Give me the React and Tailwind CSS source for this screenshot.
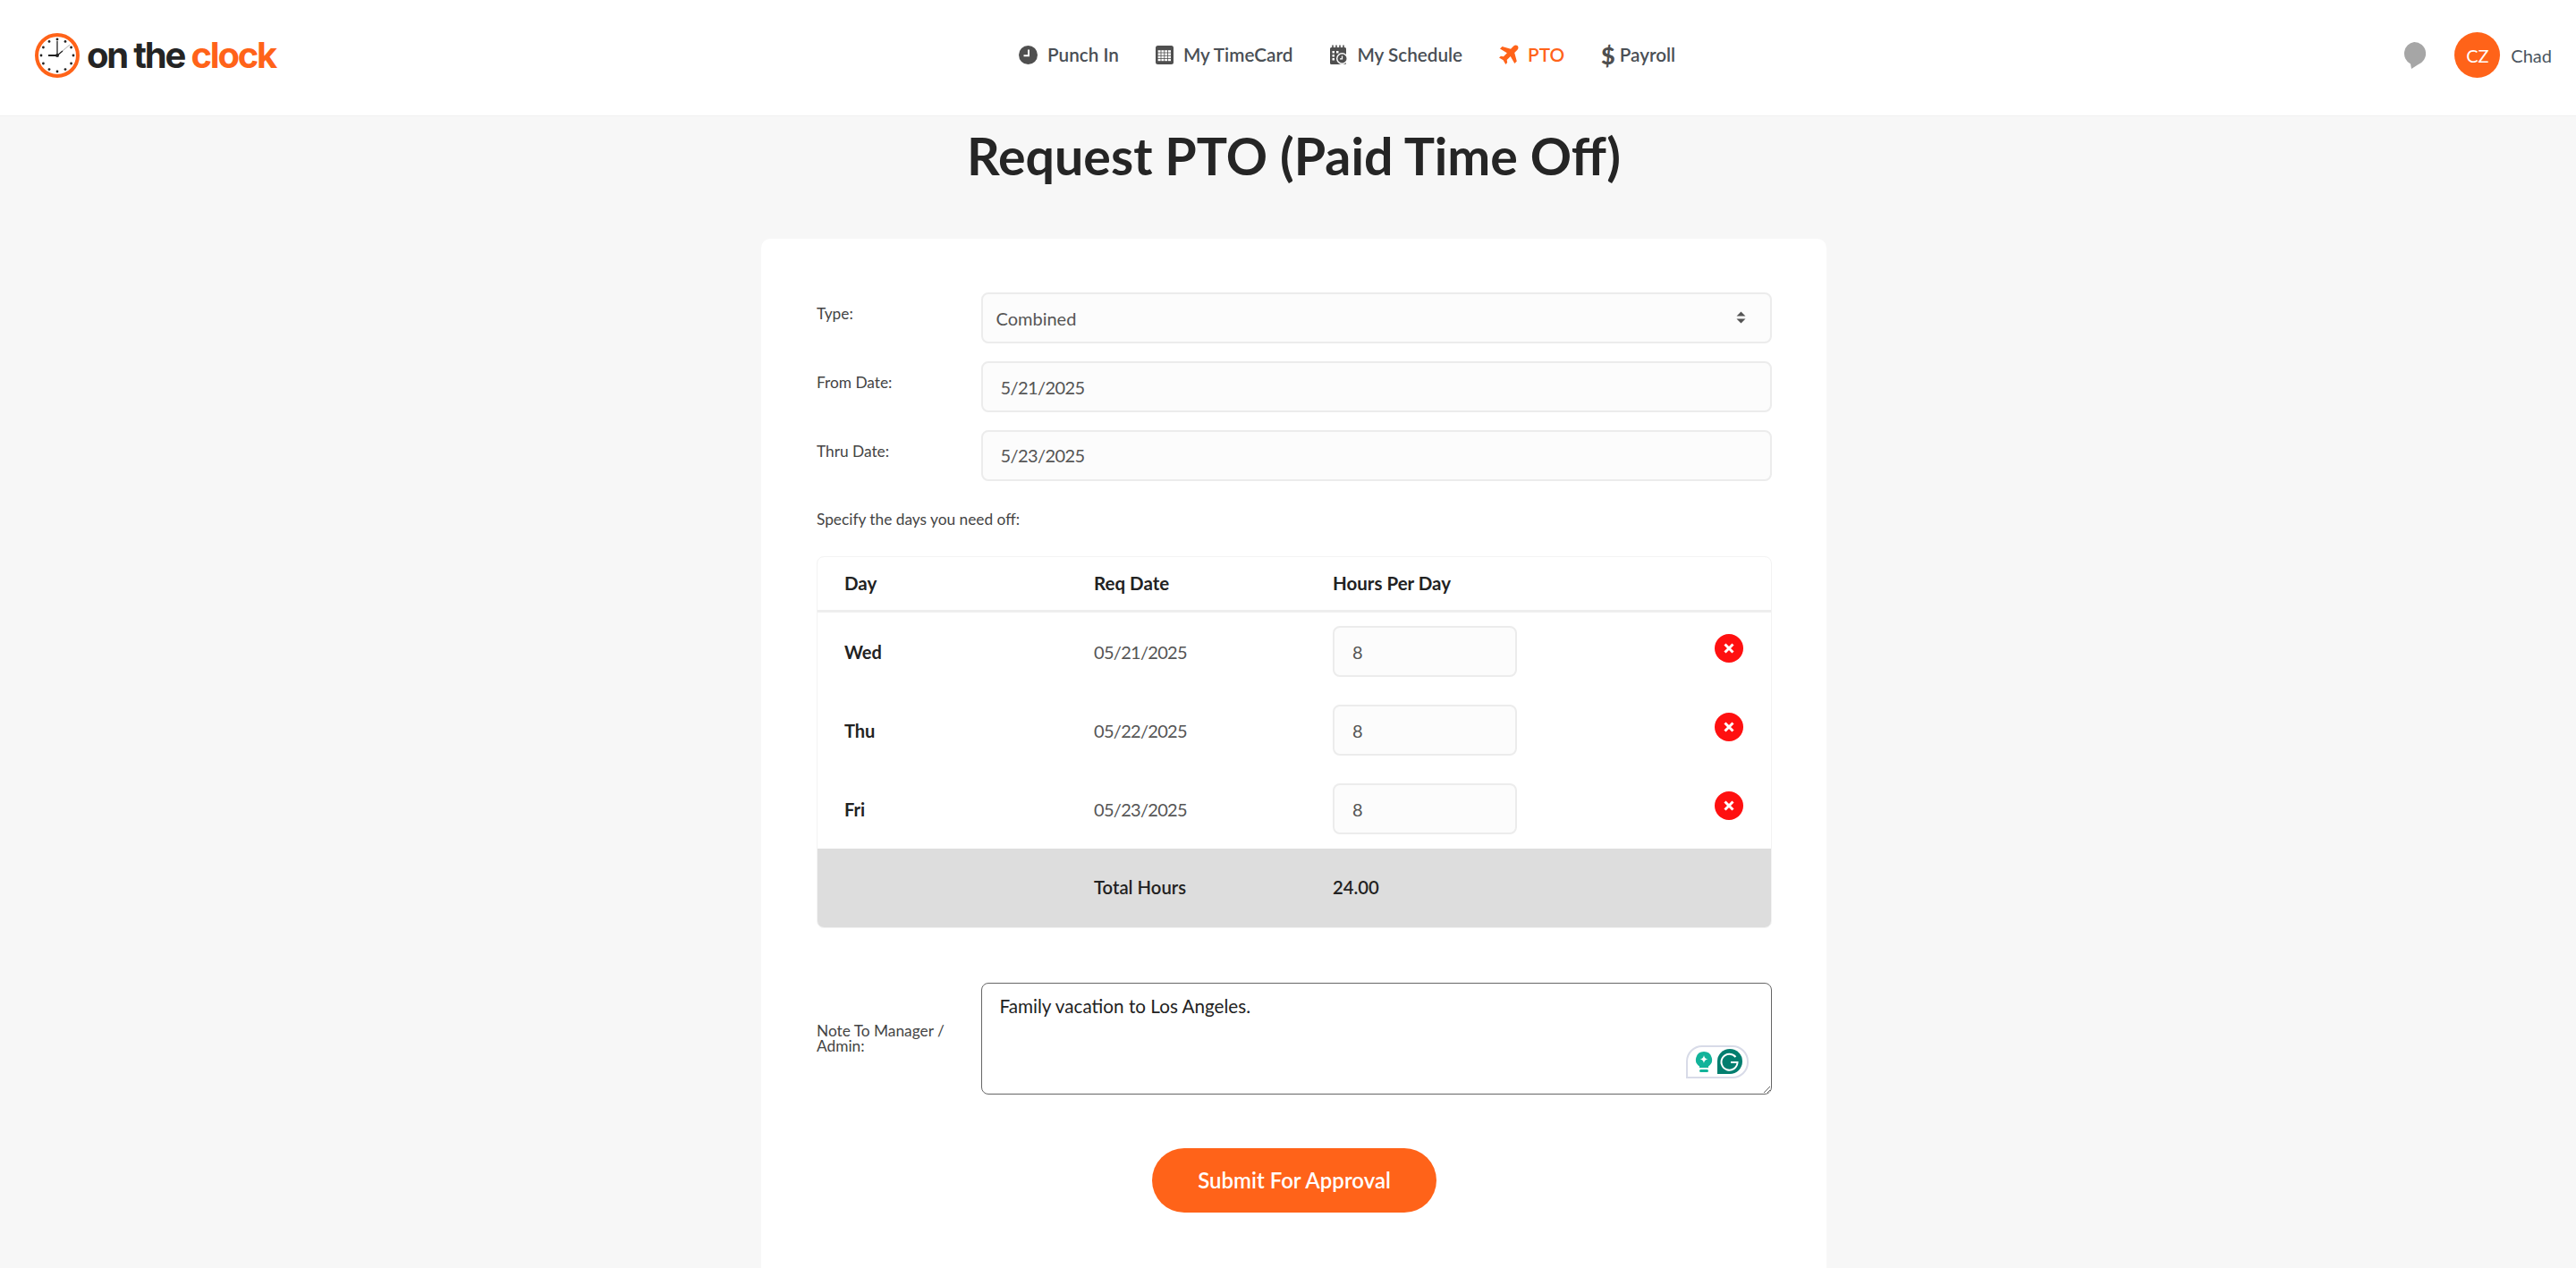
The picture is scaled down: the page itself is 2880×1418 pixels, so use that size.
const FONT = "font-['Lato','Open_Sans',sans-serif]";

function ClockLogo() {
  const dots = [];
  for (let i = 0; i < 12; i++) {
    const a = (i * Math.PI) / 6;
    dots.push(<circle key={i} cx={25 + 18 * Math.sin(a)} cy={25 - 18 * Math.cos(a)} r="1.4" fill="#222" />);
  }
  return (
    <svg width="50" height="50" viewBox="0 0 50 50">
      <circle cx="25" cy="25" r="23" fill="#fff" stroke="#ff6319" strokeWidth="4" />
      {dots}
      <path d="M25 25V9" stroke="#222" strokeWidth="1.3" />
      <path d="M25 25H15" stroke="#222" strokeWidth="2" />
      <path d="M25 25L39 13" stroke="#999" strokeWidth="0.8" />
      <path d="M25 25L31 20" stroke="#222" strokeWidth="1.2" />
      <circle cx="25" cy="25" r="2" fill="#222" />
    </svg>
  );
}

function PunchIcon() {
  return (
    <svg width="21" height="21" viewBox="0 0 21 21">
      <circle cx="10.5" cy="10.5" r="10.500" fill="#4f4f4f" />
      <path d="M11 4.500v6.700H5.500" fill="none" stroke="#fff" strokeWidth="2" />
    </svg>
  );
}

function GridIcon() {
  const cells = [];
  for (let r = 0; r < 4; r++) {
    for (let c = 0; c < 4; c++) {
      cells.push(<rect key={`${r}-${c}`} x={2.6 + c * 3.8} y={5.2 + r * 3.2} width="3" height="2.4" fill="#fff" />);
    }
  }
  return (
    <svg width="20" height="21" viewBox="0 0 20 21">
      <rect x="0" y="0" width="20" height="21" rx="2.5" fill="#4f4f4f" />
      {cells}
    </svg>
  );
}

function ScheduleIcon() {
  return (
    <svg width="22" height="22" viewBox="0 0 22 22">
      <path d="M1 4.5A1.5 1.5 0 0 1 2.500 3H17.500A1.500 1.500 0 0 1 19 4.500V20.500A1.500 1.500 0 0 1 17.500 22H2.500A1.500 1.500 0 0 1 1 20.500Z" fill="#4f4f4f" />
      <path d="M4 0.500V4M8 0.500V4M12 0.500V4M16 0.500V4" stroke="#4f4f4f" strokeWidth="1.600" />
      <rect x="3.500" y="7" width="2.500" height="2.500" fill="#fff" />
      <rect x="3.500" y="11" width="2.500" height="2.500" fill="#fff" />
      <rect x="3.500" y="15" width="2.500" height="2.500" fill="#fff" />
      <rect x="8" y="7" width="2.500" height="2.500" fill="#fff" />
      <circle cx="14.500" cy="15.500" r="6.500" fill="#fff" />
      <circle cx="14.500" cy="15.500" r="5" fill="#4f4f4f" />
      <path d="M14.500 12.500V15.800H12" stroke="#fff" strokeWidth="1.300" fill="none" />
    </svg>
  );
}

function PlaneIcon() {
  return (
    <svg width="22" height="22" viewBox="0 0 24 24">
      <path
        fill="#ff6319"
        d="M22.600 1.400c-1.300-1.300-3.500-1.200-4.900.2L14.200 5.100 3.800 2.300 1.100 5l8.600 5-4.300 4.400-3.300-.5L0 15.900l5 3 3 5 2-2-.5-3.300 4.400-4.300 5 8.600 2.700-2.700-2.800-10.400 3.500-3.500c1.400-1.400 1.500-3.600.3-4.900z"
      />
    </svg>
  );
}

function NavItem({ icon, label, active, gap }) {
  return (
    <a className={`flex items-center ${gap} text-[20.700px] font-semibold ${active ? "text-[#ff6319]" : "text-[#4a4f55]"}`}>
      {icon}
      <span>{label}</span>
    </a>
  );
}

function Header() {
  return (
    <header className="flex h-[130px] items-center border-b border-[#f1f1f1] bg-white pb-[6px]">
      <div className="flex w-[1139px] items-center pl-[39px]">
        <ClockLogo />
        <span className="ml-[8px] font-['Inter',sans-serif] text-[40px] font-bold leading-none tracking-[-2.200px] text-[#242424]">
          on the <span className="text-[#ff6319]">clock</span>
        </span>
      </div>
      <nav className="flex items-center gap-[41px]">
        <NavItem icon={<PunchIcon />} label="Punch In" gap="gap-[11px]" />
        <NavItem icon={<GridIcon />} label="My TimeCard" gap="gap-[11px]" />
        <NavItem icon={<ScheduleIcon />} label="My Schedule" gap="gap-[9px]" />
        <NavItem icon={<PlaneIcon />} label="PTO" active gap="gap-[10px]" />
        <NavItem
          icon={<span className="text-[27px] font-black leading-none text-[#4f4f4f]">$</span>}
          label="Payroll"
          gap="gap-[5px]"
        />
      </nav>
      <div className="ml-auto flex items-center pr-[27px]">
        <svg width="26" height="30" viewBox="0 0 26 30">
          <path d="M13 0a13 13 0 0 1 4 25.400L10 30l-1-5.600A13 13 0 0 1 13 0z" fill="#a6a6a6" />
        </svg>
        <div className="ml-[32px] flex h-[51px] w-[51px] items-center justify-center rounded-full bg-[#ff6319] text-[20px] text-white">
          CZ
        </div>
        <span className="ml-[12px] text-[20px] text-[#4a5560]">Chad</span>
      </div>
    </header>
  );
}

function FieldRow({ label, children, className = "" }) {
  return (
    <div className={`flex ${className}`}>
      <label className="w-[183.500px] shrink-0 pt-[12px] text-[17.300px] leading-[24px] text-[#444]">{label}</label>
      <div className="relative flex-1">{children}</div>
    </div>
  );
}

const inputCls =
  "block h-[57px] w-full rounded-[8px] border-2 border-[#ececec] bg-[#fcfcfc] px-[20px] text-[20px] text-[#555] outline-none";

function RemoveBtn() {
  return (
    <span className="flex h-[32px] w-[32px] items-center justify-center rounded-full bg-[#ff1010]">
      <svg width="14" height="14" viewBox="0 0 14 14">
        <path d="M2.500 2.500L11.500 11.500M11.500 2.500L2.500 11.500" stroke="#fff" strokeWidth="3" />
      </svg>
    </span>
  );
}

function DayRow({ day, date }) {
  return (
    <div className="flex h-[88px] items-center pl-[30px] text-[20px]">
      <span className="w-[279px] font-bold text-[#222]">{day}</span>
      <span className="w-[267px] tracking-[-0.700px] text-[#555]">{date}</span>
      <input
        defaultValue="8"
        readOnly
        className="h-[57px] w-[206px] rounded-[8px] border-2 border-[#ececec] bg-[#fcfcfc] px-[20px] text-[20px] text-[#555] outline-none"
      />
      <span className="ml-auto mr-[31px] -translate-y-[4px]">
        <RemoveBtn />
      </span>
    </div>
  );
}

function Grammarly() {
  return (
    <div className="absolute bottom-[18px] right-[26px] flex h-[37px] w-[70px] items-center rounded-t-[18px] rounded-br-[18px] border-2 border-[#d8dbe8] bg-white pl-[8px]">
      <svg width="20" height="25" viewBox="0 0 20 25">
        <path d="M10 1a9 9 0 0 1 5 16.500V19H5v-1.500A9 9 0 0 1 10 1z" fill="#12b39a" />
        <rect x="5" y="21" width="10" height="3" rx="1.500" fill="#12b39a" />
        <path d="M10 5c.6 3 1.400 3.800 4.500 4.500-3.100.7-3.900 1.500-4.500 4.500-.6-3-1.400-3.800-4.500-4.500C8.600 8.800 9.400 8 10 5z" fill="#fff" />
      </svg>
      <svg className="ml-[5px]" width="28" height="28" viewBox="0 0 28 28">
        <path d="M14 0a14 14 0 0 1 0 28H0V14A14 14 0 0 1 14 0z" fill="#027e6f" />
        <path d="M20.500 9A9 9 0 1 0 22.500 15H15" fill="none" stroke="#fff" strokeWidth="2" />
      </svg>
    </div>
  );
}

export default function App() {
  return (
    <div className={`min-h-[1418px] bg-[#f7f7f7] ${FONT}`}>
      <div className="h-[1418px] overflow-hidden">
        <Header />
        <h1 className="mt-[10px] ml-[13px] text-center text-[57.300px] font-bold leading-[68px] text-[#252525]">
          Request PTO (Paid Time Off)
        </h1>
        <main className="mt-[59px] ml-[851px] h-[1200px] w-[1191px] rounded-t-[10px] bg-white px-[62px] pt-[60px] pr-[61px]">
          <FieldRow label="Type:" className="mb-[20px]">
            <select defaultValue="Combined" className={`${inputCls} h-[56px] appearance-none !px-[15px]`}>
              <option>Combined</option>
            </select>
            <svg className="absolute right-[29px] top-[21px]" width="11" height="14" viewBox="0 0 11 14">
              <path d="M5.500 0.500L10.500 5.500H0.500ZM5.500 13.500L0.500 8.500H10.500Z" fill="#555" />
            </svg>
          </FieldRow>
          <FieldRow label="From Date:" className="mb-[19.500px]">
            <input className={`${inputCls} tracking-[-0.600px]`} defaultValue="5/21/2025" readOnly />
          </FieldRow>
          <FieldRow label="Thru Date:">
            <input className={`${inputCls} tracking-[-0.600px]`} defaultValue="5/23/2025" readOnly />
          </FieldRow>
          <p className="mt-[31px] text-[17.300px] leading-[24px] text-[#444]">Specify the days you need off:</p>
          <div className="mt-[29px] overflow-hidden rounded-[8px] border border-[#f3f3f3]">
            <div className="flex h-[62px] items-center border-b-[3px] border-[#eeeeee] pl-[30px] text-[20.500px] font-bold text-[#222]">
              <span className="w-[279px]">Day</span>
              <span className="w-[267px]">Req Date</span>
              <span>Hours Per Day</span>
            </div>
            <DayRow day="Wed" date="05/21/2025" />
            <DayRow day="Thu" date="05/22/2025" />
            <DayRow day="Fri" date="05/23/2025" />
            <div className="flex h-[88px] items-center bg-[#dddddd] pl-[309px] text-[20.300px] font-semibold text-[#222]">
              <span className="w-[267px]">Total Hours</span>
              <span>24.00</span>
            </div>
          </div>
          <div className="mt-[61px] flex items-center">
            <label className="w-[183.500px] shrink-0 pr-[30px] text-[17.300px] leading-[17px] text-[#444]">
              Note To Manager / Admin:
            </label>
            <div className="relative flex-1">
              <textarea
                defaultValue="Family vacation to Los Angeles."
                className="block h-[125px] w-full rounded-[8px] border-[1.500px] border-[#666] bg-white px-[20px] py-[12px] text-[20.700px] leading-[26px] text-[#222] outline-none"
              />
              <Grammarly />
            </div>
          </div>
          <div className="mt-[60px] flex justify-center">
            <button className="h-[72px] w-[318px] rounded-full bg-[#ff6319] text-[24px] font-semibold text-white">
              Submit For Approval
            </button>
          </div>
        </main>
      </div>
    </div>
  );
}
